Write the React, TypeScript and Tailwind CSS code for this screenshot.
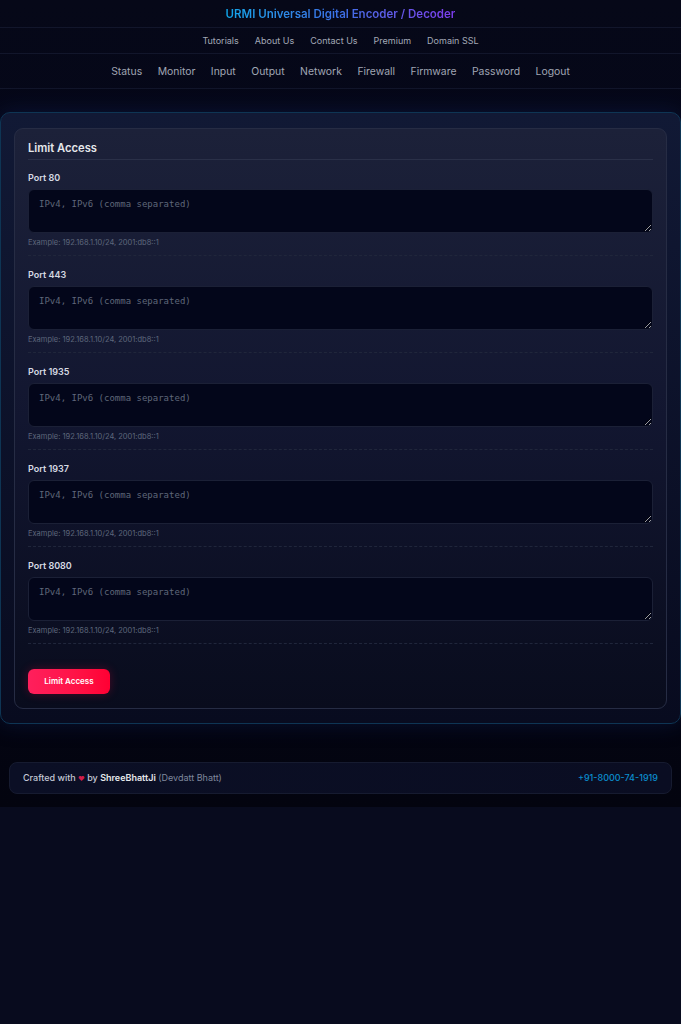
import React from 'react';

const ports = ['80', '443', '1935', '1937', '8080'];
const siteLinks = ['Tutorials', 'About Us', 'Contact Us', 'Premium', 'Domain SSL'];
const mainLinks = ['Status', 'Monitor', 'Input', 'Output', 'Network', 'Firewall', 'Firmware', 'Password', 'Logout'];

export default function App() {
  return (
    <div className="min-h-screen bg-[#080b1e] font-['Inter','Liberation_Sans',sans-serif]">
      <div className="bg-gradient-to-b from-[#060818] via-[#04061a] to-[#03040f] pb-[13px]">
        {/* header */}
        <header className="border-b border-[#12162b]">
          <div className="h-[28px] pt-[2px] flex items-center justify-center border-b border-[#12162b]">
            <h1 className="text-[11.5px] font-semibold bg-gradient-to-r from-[#0ea5e9] via-[#3b6fe6] to-[#7c3aed] bg-clip-text text-transparent">
              URMI Universal Digital Encoder / Decoder
            </h1>
          </div>
          <nav className="h-[26px] pt-[1px] flex items-center justify-center gap-[16px] text-[9px] text-[#a3a9b7] border-b border-[#12162b]">
            {siteLinks.map((l) => (
              <a key={l} href="#">{l}</a>
            ))}
          </nav>
          <nav className="h-[34px] pt-[2px] flex items-center justify-center gap-[15.5px] text-[10.4px] text-[#a0a6b4]">
            {mainLinks.map((l) => (
              <a key={l} href="#">{l}</a>
            ))}
          </nav>
        </header>

        {/* panel */}
        <main className="mt-[23px] rounded-[10px] border border-[#0e3554] bg-gradient-to-b from-[#111935] to-[#080b1f] px-[13px] pt-[15px] pb-[14px] shadow-[0_0_20px_rgba(14,30,80,0.5)]">
          <div className="rounded-[9px] border border-[#262c44] bg-gradient-to-b from-[#1c2139] via-[#121630] to-[#090c1d] px-[13px] pt-[12px] pb-[14px]">
            <h2 className="text-[11.2px] leading-[14px] font-semibold text-[#e5e7eb] pb-[4px] border-b border-[#2a3048]">
              Limit Access
            </h2>
            {ports.map((p, i) => (
              <section
                key={p}
                className={(i === 0 ? 'pt-[12px]' : 'pt-[13.5px]') + ' pb-[6.5px] border-b border-dashed border-[#20263b]'}
              >
                <label className="block text-[9px] leading-[12px] font-semibold text-[#d5d9e2] mb-[5px]">
                  Port {p}
                </label>
                <textarea
                  placeholder="IPv4, IPv6 (comma separated)"
                  className="block w-full h-[44px] rounded-[6px] border border-[#1b2036] bg-[#03061a] px-[10px] py-[8px] text-[9px] leading-[12px] text-[#cbd5e1] placeholder:text-[#5f6679] font-['DejaVu_Sans_Mono','Liberation_Mono',monospace] outline-none"
                />
                <p className="mt-[5px] text-[7.5px] leading-[10px] text-[#5e677c]">
                  Example: 192.168.1.10/24, 2001:db8::1
                </p>
              </section>
            ))}
            <button className="mt-[25px] h-[25px] w-[82px] rounded-[6px] bg-gradient-to-r from-[#ff1f5c] to-[#ff0033] text-[8px] font-semibold text-white shadow-[0_0_10px_rgba(255,0,60,0.25)]">
              Limit Access
            </button>
          </div>
        </main>

        {/* footer */}
        <footer className="mt-[38px] mx-[9px] h-[32px] rounded-[8px] border border-[#161b30] bg-gradient-to-r from-[#0b0f25] to-[#0a0d22] px-[13px] flex items-center justify-between text-[9px]">
          <p className="font-medium text-[#c3c8d4]">
            Crafted with <span className="text-[#d11d4b] text-[6.5px]">❤</span> by{' '}
            <span className="font-semibold text-[#e5e7eb]">ShreeBhattJi</span>{' '}
            <span className="font-normal text-[#7f889d]">(Devdatt Bhatt)</span>
          </p>
          <a href="#" className="font-medium text-[#0a8ccc]">+91-8000-74-1919</a>
        </footer>
      </div>
    </div>
  );
}
